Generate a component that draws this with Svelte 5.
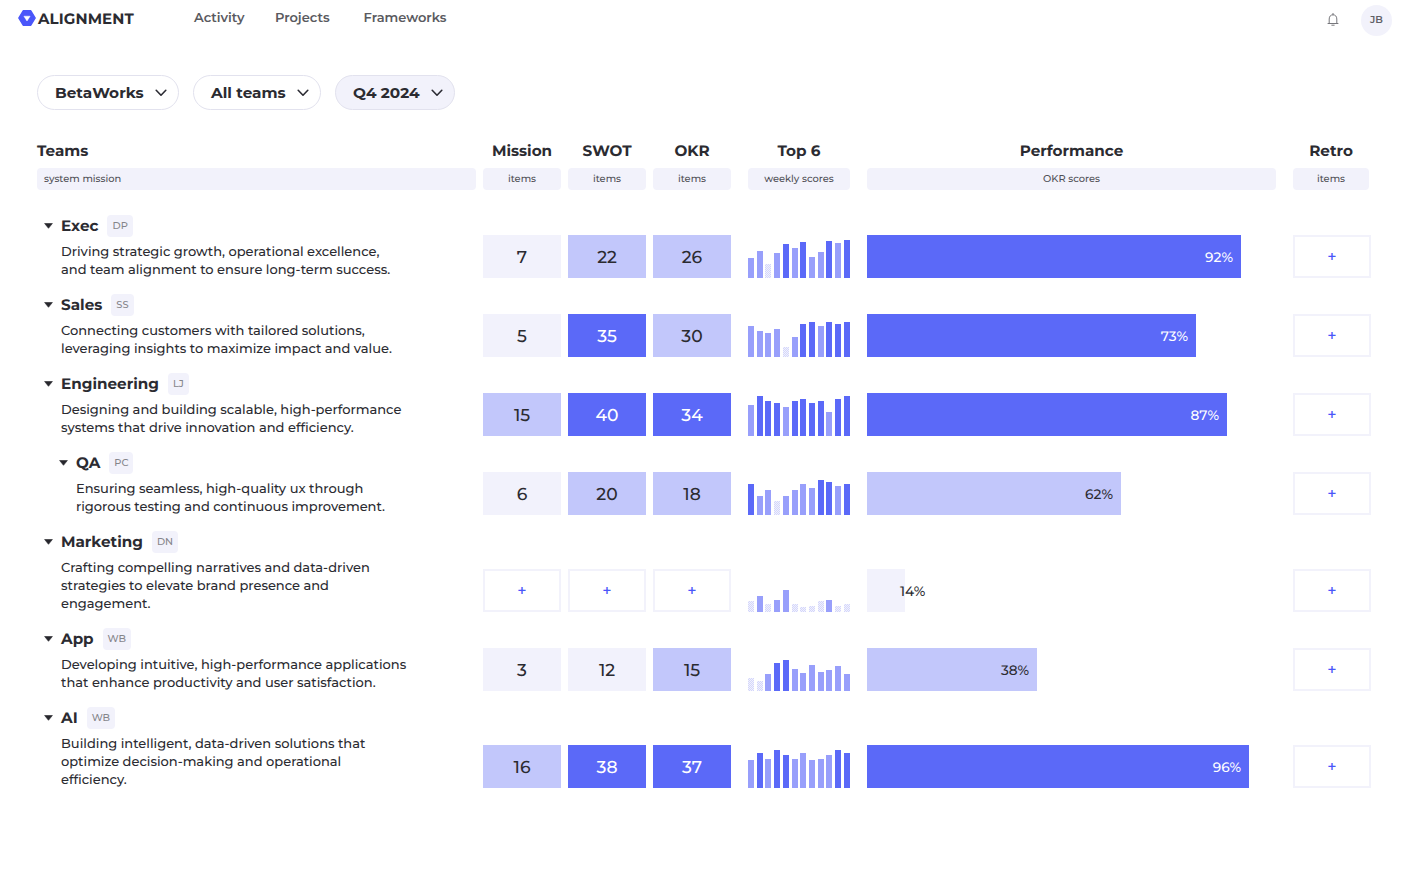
<script>
	const navItems = ["Activity", "Projects", "Frameworks"];

	let filters = [
		{ label: "BetaWorks", selected: false },
		{ label: "All teams", selected: false },
		{ label: "Q4 2024", selected: true }
	];

	const columns = [
		{ title: "Teams", sub: "system mission" },
		{ title: "Mission", sub: "items" },
		{ title: "SWOT", sub: "items" },
		{ title: "OKR", sub: "items" },
		{ title: "Top 6", sub: "weekly scores" },
		{ title: "Performance", sub: "OKR scores" },
		{ title: "Retro", sub: "items" }
	];

	// levels: l = low, m = medium, h = high (one letter per weekly bar)
	let teams = [
		{
			name: "Exec",
			owner: "DP",
			mission: "Driving strategic growth, operational excellence,\nand team alignment to ensure long-term success.",
			items: [7, 22, 26],
			weeks: [20, 27, 14, 25, 34, 30, 36, 21, 26, 37, 35, 38],
			levels: "mmlmhmhmmhmh",
			score: 92,
			bar: 374
		},
		{
			name: "Sales",
			owner: "SS",
			mission: "Connecting customers with tailored solutions,\nleveraging insights to maximize impact and value.",
			items: [5, 35, 30],
			weeks: [31, 26, 24, 28, 10, 20, 33, 35, 31, 35, 33, 35],
			levels: "mmmmlmhhmhhh",
			score: 73,
			bar: 329
		},
		{
			name: "Engineering",
			owner: "LJ",
			mission: "Designing and building scalable, high-performance\nsystems that drive innovation and efficiency.",
			items: [15, 40, 34],
			weeks: [31, 40, 35, 33, 29, 35, 37, 33, 35, 24, 37, 40],
			levels: "mhhhmhhhhmhh",
			score: 87,
			bar: 360
		},
		{
			name: "QA",
			owner: "PC",
			nested: true,
			mission: "Ensuring seamless, high-quality ux through\nrigorous testing and continuous improvement.",
			items: [6, 20, 18],
			weeks: [31, 19, 25, 14, 19, 25, 31, 27, 35, 33, 29, 31],
			levels: "hmmlmmmmhhmh",
			score: 62,
			bar: 254
		},
		{
			name: "Marketing",
			owner: "DN",
			mission: "Crafting compelling narratives and data-driven\nstrategies to elevate brand presence and\nengagement.",
			items: [null, null, null],
			weeks: [11, 16, 8, 12, 22, 8, 5, 6, 11, 12, 6, 8],
			levels: "lmlmmllllmll",
			score: 14,
			bar: 38
		},
		{
			name: "App",
			owner: "WB",
			mission: "Developing intuitive, high-performance applications\nthat enhance productivity and user satisfaction.",
			items: [3, 12, 15],
			weeks: [13, 10, 17, 28, 31, 22, 18, 26, 19, 21, 25, 17],
			levels: "llmhhmmmmmmm",
			score: 38,
			bar: 170
		},
		{
			name: "AI",
			owner: "WB",
			mission: "Building intelligent, data-driven solutions that\noptimize decision-making and operational\nefficiency.",
			items: [16, 38, 37],
			weeks: [28, 35, 29, 38, 33, 29, 35, 28, 29, 33, 38, 35],
			levels: "mhmhhmmmmmhh",
			score: 96,
			bar: 382
		}
	];

	function itemTone(n) {
		if (n === null) return "empty";
		if (n > 30) return "high";
		return n >= 15 ? "mid" : "low";
	}

	function scoreTone(n) {
		if (n > 70) return "high";
		return n > 30 ? "mid" : "low";
	}
</script>

<div class="page">
	<header>
		<div class="logo">
			<svg width="18" height="16" viewBox="0 0 18 16">
				<path d="M5.2 0.8h7.6L17.2 8l-4.4 7.2H5.2L0.8 8z" fill="#4a56fa" stroke="#4a56fa" stroke-width="1.4" stroke-linejoin="round" />
				<path d="M5.9 6.2h6.2L9 11z" fill="#fff" stroke="#fff" stroke-width="0.5" stroke-linejoin="round" />
			</svg>
			<span>ALIGNMENT</span>
		</div>
		<nav>
			{#each navItems as item}
				<a href="#{item}">{item}</a>
			{/each}
		</nav>
		<div class="account">
			<svg class="bell" width="12" height="14" viewBox="0 0 12 14" fill="none" stroke="#77777c" stroke-width="1">
				<path d="M1 10.5h10M2.2 10.3V6C2.2 3.3 3.8 1.8 6 1.8S9.8 3.3 9.8 6v4.3M6 0.4v1.4M4.8 12.2h2.4" stroke-linecap="round" />
			</svg>
			<div class="avatar">JB</div>
		</div>
	</header>

	<div class="filters">
		{#each filters as filter}
			<button class="filter" class:selected={filter.selected}>
				<span>{filter.label}</span>
				<svg width="12" height="8" viewBox="0 0 12 8" fill="none" stroke="#2b2b33" stroke-width="1.6" stroke-linecap="round" stroke-linejoin="round">
					<path d="M1.2 1.3L6 6.2l4.8-4.9" />
				</svg>
			</button>
		{/each}
	</div>

	<div class="grid head">
		{#each columns as column}
			<div class="column">
				<h2>{column.title}</h2>
				<div class="sub">{column.sub}</div>
			</div>
		{/each}
	</div>

	{#each teams as team}
		<div class="grid row">
			<div class="team" class:nested={team.nested}>
				<div class="title">
					<svg width="9" height="7" viewBox="0 0 9 7"><path d="M0.6 0.5h7.8L4.5 5.3z" fill="#26262c" stroke="#26262c" stroke-width="0.6" stroke-linejoin="round" /></svg>
					<h3>{team.name}</h3>
					<span class="owner">{team.owner}</span>
				</div>
				<p>{team.mission}</p>
			</div>
			{#each team.items as count}
				<div class="cell {itemTone(count)}">{count ?? "+"}</div>
			{/each}
			<div class="weeks">
				{#each team.weeks as height, i}
					<i class={team.levels[i]} style="height: {height}px"></i>
				{/each}
			</div>
			<div class="performance">
				<div class="bar {scoreTone(team.score)}" class:short={team.bar < 60} style="width: {team.bar}px">
					<span>{team.score}%</span>
				</div>
			</div>
			<div class="cell empty retro">+</div>
		</div>
	{/each}
</div>

<style>
	:global(body) {
		background: #fff;
	}

	.page {
		box-sizing: border-box;
		width: 1408px;
		height: 891px;
		overflow: hidden;
		color: #2b2b31;
		font-family: Montserrat, Inter, sans-serif;
		text-rendering: geometricPrecision;
	}

	header {
		display: flex;
		height: 40px;
		padding: 0 16px 0 18px;
	}

	.logo {
		display: flex;
		align-items: center;
		width: 176px;
		height: 36px;
		gap: 2px;
		font-size: 15px;
		font-weight: 700;
		letter-spacing: 0.1px;
	}

	nav {
		display: flex;
		height: 36px;
		align-items: center;
	}

	nav a {
		color: #5a5a60;
		font-size: 13px;
		font-weight: 600;
		text-decoration: none;
		line-height: 16px;
		margin-right: 30.5px;
	}

	nav a:nth-child(2) {
		margin-right: 34px;
	}

	.account {
		display: flex;
		align-items: center;
		gap: 22px;
		margin-left: auto;
	}

	.avatar {
		width: 31px;
		height: 31px;
		border-radius: 50%;
		background: #f2f2fb;
		color: #606066;
		font-size: 10px;
		font-weight: 600;
		line-height: 30px;
		text-align: center;
	}

	.filters {
		display: flex;
		gap: 14px;
		padding: 35px 0 0 37px;
	}

	.filter {
		display: flex;
		box-sizing: border-box;
		align-items: center;
		justify-content: space-between;
		width: 142px;
		height: 35px;
		padding: 0 11px 0 17px;
		border: 1px solid #e2e2ee;
		border-radius: 18px;
		background: #fff;
		color: #2b2b31;
		font: 700 15.3px Montserrat, Inter, sans-serif;
	}

	.filter:nth-child(2) {
		width: 128px;
	}

	.filter.selected {
		width: 120px;
		background: #f2f2fb;
	}

	.grid {
		display: grid;
		grid-template-columns: 439px 78px 78px 78px 112px 419px 86px;
		column-gap: 7px;
		margin-left: 37px;
	}

	.grid > :nth-child(n + 5) {
		margin-left: 10px;
	}

	.head {
		margin-top: 30px;
		margin-bottom: 25px;
		text-align: center;
	}

	.column:first-child {
		text-align: left;
	}

	h2 {
		margin: 0 0 7px;
		font-size: 15.2px;
		font-weight: 700;
		line-height: 21px;
	}

	.sub {
		height: 22px;
		padding: 0 7px;
		border-radius: 4px;
		background: #f2f2fb;
		color: #505056;
		font-size: 9.9px;
		font-weight: 500;
		line-height: 23px;
	}

	.row {
		align-items: end;
		margin-bottom: 16px;
	}

	.team {
		padding-left: 7px;
	}

	.team.nested {
		padding-left: 22px;
	}

	.title {
		display: flex;
		align-items: center;
		height: 22px;
	}

	h3 {
		margin: 0 9px 0 8px;
		font-size: 15.2px;
		font-weight: 700;
		line-height: 22px;
	}

	.owner {
		height: 22px;
		padding: 0 5px;
		border-radius: 4px;
		background: #f2f2fb;
		color: #85858a;
		font-size: 9.9px;
		font-weight: 500;
		line-height: 23px;
	}

	p {
		margin: 0 0 -1px 17px;
		padding-top: 6px;
		font-size: 13px;
		font-weight: 500;
		line-height: 18px;
		white-space: pre-line;
	}

	.cell {
		box-sizing: border-box;
		height: 43px;
		font-size: 17.2px;
		font-weight: 500;
		line-height: 46px;
		text-align: center;
	}

	.low {
		background: #f2f2fc;
	}

	.mid {
		background: #c2c7fb;
	}

	.high {
		background: #5b69f8;
		color: #fff;
	}

	.empty {
		border: 2px solid #f2f2fb;
		color: #4a56fa;
		font-size: 16px;
		line-height: 41px;
	}

	.retro {
		width: 78px;
	}

	.weeks {
		display: flex;
		align-items: flex-end;
		justify-content: space-between;
		height: 43px;
	}

	.weeks i {
		width: 6px;
	}

	.l {
		background: repeating-conic-gradient(#d3d6fc 0 25%, #f2f2fc 0 50%) 0 0 / 2px 2px;
	}

	.m {
		background: #989ffb;
	}

	.h {
		background: #5b69f8;
	}

	.bar {
		box-sizing: border-box;
		height: 43px;
		padding-right: 8px;
		font-size: 13.7px;
		font-weight: 500;
		line-height: 46px;
		text-align: right;
	}

	.bar.short {
		padding: 0 0 0 33px;
		text-align: left;
	}
</style>
